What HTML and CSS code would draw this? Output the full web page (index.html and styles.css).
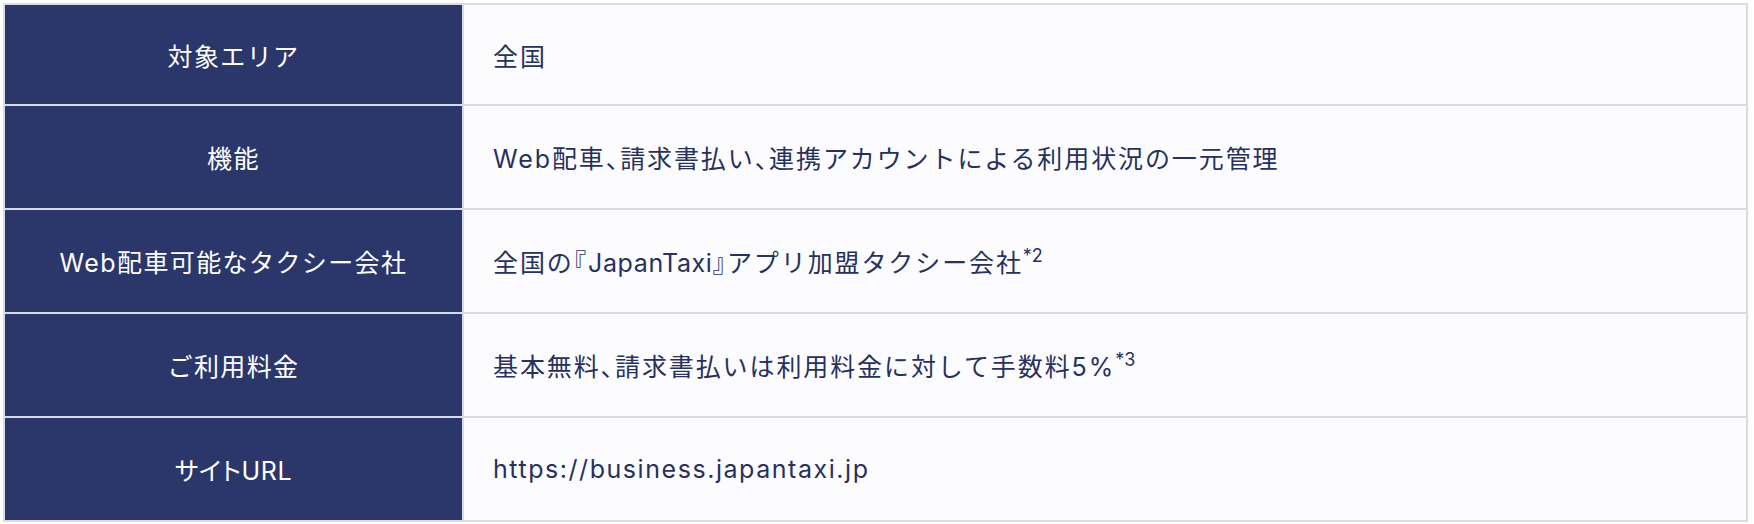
FILE: index.html
```html
<!DOCTYPE html>
<html lang="ja">
<head>
<meta charset="utf-8">
<link rel="stylesheet" href="styles.css">
</head>
<body>
<div class="wrap">
<table class="spec">
  <tr class="first">
    <th>対象エリア</th>
    <td>全国</td>
  </tr>
  <tr>
    <th>機能</th>
    <td>Web配車<span class="p">、</span>請求書払い<span class="p">、</span>連携アカウントによる利用状況の一元管理</td>
  </tr>
  <tr>
    <th>Web配車可能なタクシー会社</th>
    <td>全国の<span class="p">『</span><span class="lat">JapanTaxi</span><span class="p">』</span>アプリ加盟タクシー会社<sup>*2</sup></td>
  </tr>
  <tr>
    <th>ご利用料金</th>
    <td>基本無料<span class="p">、</span>請求書払いは利用料金に対して手数料5%<sup>*3</sup></td>
  </tr>
  <tr>
    <th class="tight">サイトURL</th>
    <td class="url">https://business.japantaxi.jp</td>
  </tr>
</table>
</div>
</body>
</html>
```

FILE: styles.css
```css
html, body {
  margin: 0;
  padding: 0;
  background: #ffffff;
}
.wrap {
  padding: 3px 6px 0 3px;
}
.spec {
  width: 100%;
  border-collapse: collapse;
  border: 2px solid #d8dce3;
  font-family: "Inter", "Noto Sans CJK JP", "Noto Sans", sans-serif;
  font-size: 25px;
  letter-spacing: 1.9px;
}
.spec th,
.spec td {
  border: 2px solid #d8dce3;
  height: 104px;
  box-sizing: border-box;
  padding: 0;
  font-weight: 400;
  vertical-align: middle;
}
.spec .first th,
.spec .first td {
  height: 101px;
}
.spec th {
  width: 459px;
  background: #2b376b;
  color: #ffffff;
  text-align: center;
  letter-spacing: 1.4px;
}
.spec th.tight {
  letter-spacing: 0.6px;
  font-feature-settings: "palt";
}
.spec td {
  background: #fcfcff;
  color: #27315d;
  text-align: left;
  padding-left: 29px;
}
.spec td.url {
  letter-spacing: 1.55px;
}
.spec .lat {
  letter-spacing: 0.6px;
}
.spec .p {
  font-family: "Noto Sans CJK JP", sans-serif;
  font-feature-settings: "halt";
}
.spec sup {
  font-size: 18px;
  letter-spacing: 0;
  line-height: 0;
  vertical-align: 0.55em;
}
```
